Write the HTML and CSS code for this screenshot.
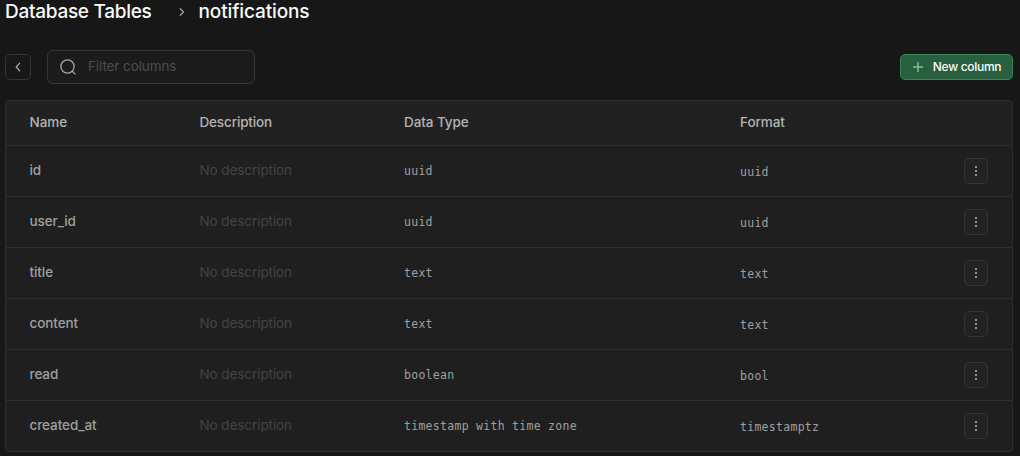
FILE: index.html
```html
<!DOCTYPE html>
<html lang="en">
<head>
<meta charset="utf-8">
<title>Database Tables</title>
<link rel="stylesheet" href="styles.css">
</head>
<body>
<svg class="sprite" width="0" height="0">
  <symbol id="dots" viewBox="0 0 14 14"><path d="M6 2h2v2H6zM6 6h2v2H6zM6 10h2v2H6z" fill="currentColor"/></symbol>
</svg>
<main class="page">
  <nav class="crumbs">
    <h1 class="crumb crumb-root">Database Tables</h1>
    <svg class="crumb-sep" width="6" height="10" viewBox="0 0 6 10"><path d="M1.2 1.7 4.6 5 1.2 8.3"/></svg>
    <h2 class="crumb crumb-table">notifications</h2>
  </nav>
  <div class="toolbar">
    <button class="back" aria-label="Back"><svg width="6" height="10" viewBox="0 0 6 10"><path d="M4.7 1.2 1.2 5l3.5 3.8"/></svg></button>
    <label class="search">
      <svg width="18" height="18" viewBox="0 0 18 18"><circle cx="8.5" cy="8.5" r="6.6"/><path d="m13.3 13.3 2.8 2.8"/></svg>
      <input class="filter" type="text" placeholder="Filter columns">
    </label>
    <button class="primary"><svg width="10" height="10" viewBox="0 0 10 10"><path d="M5 0v10M0 5h10"/></svg><span>New column</span></button>
  </div>
  <section class="table">
    <div class="row head"><span class="h-name">Name</span><span class="h-desc">Description</span><span class="h-type">Data Type</span><span class="h-format">Format</span></div>
    <div class="row"><span class="name">id</span><span class="desc">No description</span><code class="type">uuid</code><code class="format">uuid</code><button class="more" aria-label="More"><svg width="14" height="14"><use href="#dots"/></svg></button></div>
    <div class="row"><span class="name">user_id</span><span class="desc">No description</span><code class="type">uuid</code><code class="format">uuid</code><button class="more" aria-label="More"><svg width="14" height="14"><use href="#dots"/></svg></button></div>
    <div class="row"><span class="name">title</span><span class="desc">No description</span><code class="type">text</code><code class="format">text</code><button class="more" aria-label="More"><svg width="14" height="14"><use href="#dots"/></svg></button></div>
    <div class="row"><span class="name">content</span><span class="desc">No description</span><code class="type">text</code><code class="format">text</code><button class="more" aria-label="More"><svg width="14" height="14"><use href="#dots"/></svg></button></div>
    <div class="row"><span class="name">read</span><span class="desc">No description</span><code class="type">boolean</code><code class="format">bool</code><button class="more" aria-label="More"><svg width="14" height="14"><use href="#dots"/></svg></button></div>
    <div class="row"><span class="name">created_at</span><span class="desc">No description</span><code class="type">timestamp with time zone</code><code class="format">timestamptz</code><button class="more" aria-label="More"><svg width="14" height="14"><use href="#dots"/></svg></button></div>
  </section>
</main>
</body>
</html>
```
FILE: styles.css
```css
* { box-sizing: border-box; }
body {
  margin: 0;
  height: 456px;
  overflow: hidden;
  background: #171717;
  color: #a0a0a0;
  font: 400 13.5px/20px Inter, "Liberation Sans", sans-serif;
}
.sprite { display: block; }
.page { padding: 0 7px 0 5px; }
button { padding: 0; font: inherit; display: flex; align-items: center; justify-content: center; }
svg { fill: none; stroke-linecap: round; stroke-linejoin: round; flex: none; }

.crumbs { display: flex; align-items: center; height: 24px; }
.crumb { margin: 0; font-size: 19px; font-weight: 500; line-height: 24px; color: #fafafa; white-space: nowrap; }
.crumb-root { width: 174px; letter-spacing: -0.28px; }
.crumb-table { letter-spacing: -0.12px; }
.crumb-sep { margin-right: 13.5px; stroke: #a0a0a0; stroke-width: 1.2; }

.toolbar { display: flex; align-items: center; height: 34px; margin: 26px 0 16px; }
.back { width: 26px; height: 26px; background: #181818; border: 1px solid #343434; border-radius: 5px; }
.back svg { stroke: #b0b0b0; stroke-width: 1.2; }
.search {
  display: flex; align-items: center; gap: 11px;
  width: 208px; height: 34px; margin-left: 16px; padding-left: 11px;
  background: #1b1b1b; border: 1px solid #363636; border-radius: 6px;
}
.search svg { stroke: #a6a6a6; stroke-width: 1.3; }
.filter { width: 150px; padding: 0 0 2px; border: 0; outline: 0; background: none; font: inherit; letter-spacing: -0.1px; }
.filter::placeholder { color: #4d4d4d; opacity: 1; }
.primary {
  width: 113px; height: 26px; margin-left: auto; padding-left: 1px; gap: 10px;
  background: #28603f; border: 1px solid #358457; border-radius: 5px;
  color: #fafafa; font-size: 12px; font-weight: 500; letter-spacing: -0.3px; white-space: nowrap;
}
.primary svg { stroke: #7fc49c; stroke-width: 1.4; stroke-linecap: butt; }

.table { background: #1f1f1f; border: 1px solid #2e2e2e; border-radius: 4px; overflow: hidden; }
.row {
  display: grid; grid-template-columns: 170px 204px 336px 224px 24px; align-items: center;
  height: 51px; padding-left: 24px; border-bottom: 1px solid #2e2e2e;
}
.row:last-child { height: 50px; border-bottom: 0; }
.row > span { margin-left: -0.5px; padding-bottom: 2px; letter-spacing: -0.08px; }
.head { height: 45px; background: #212121; color: #b4b4b4; font-weight: 500; }
.row > .h-desc { letter-spacing: -0.15px; }
.row > .h-type, .row > .h-format { margin-left: 0; }
.name { font-weight: 500; }
.desc { color: #444; }
code { font: 11.5px/20px "DejaVu Sans Mono", monospace; letter-spacing: 0.28px; }
.type { padding-bottom: 1px; }
.format { padding-top: 1px; }
.more { width: 24px; height: 26px; background: #232323; border: 1px solid #343434; border-radius: 5px; color: #959595; }
```
